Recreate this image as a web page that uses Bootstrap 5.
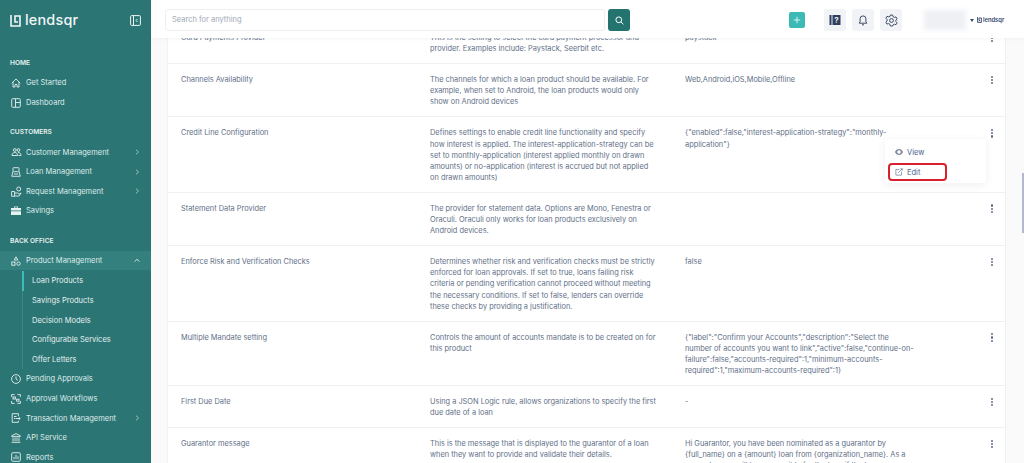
<!DOCTYPE html>
<html lang="en">
<head>
    <meta charset="UTF-8">
    <meta name="viewport" content="width=device-width, initial-scale=1.0">
    <title>Lendsqr - Loan Products</title>
    <link href="https://cdn.jsdelivr.net/npm/bootstrap@5.3.0/dist/css/bootstrap.min.css" rel="stylesheet">
    <script src="https://cdn.jsdelivr.net/npm/bootstrap@5.3.0/dist/js/bootstrap.bundle.min.js"></script>
    <style>
        html, body { height: 100%; overflow: hidden; }
        body { font-family: Inter, "Liberation Sans", sans-serif; font-size: 7.4px; color: #5b6a84; background: #fafafb; }
        svg { display: block; flex: none; }
        .app-shell { height: 463px; }
        .side-bar { width: 151px; background: #2b7574; color: #e6f0ef; flex: none; overflow: hidden; }
        .side-bar > * { flex: none; }
        .brand-row { height: 41px; padding: 0 10px 0 10px; }
        .brand-name { font-size: 14.4px; font-weight: 500; letter-spacing: .2px; color: #f2f7f7; line-height: 1; }
        .side-head { font-size: 6.6px; font-weight: 600; color: #e6f0ef; height: 12px; line-height: 12px; padding-left: 10px; margin-top: 13.8px; margin-bottom: 4.2px; white-space: nowrap; }
        .side-head.head-first { margin-top: 16px; }
        .side-item { height: 19.6px; padding-left: 11px; padding-right: 11.5px; color: #dfeceb; font-size: 7.5px; white-space: nowrap; }
        .side-item .ico { width: 15px; }
        .side-item .chev { margin-left: auto; }
        .side-item.is-open { background: #33807f; margin-bottom: 1px; }
        .sub-list { margin-left: 22px; border-left: 1px solid #3f8685; }
        .sub-item { height: 19.6px; padding-left: 9px; font-size: 7.5px; color: #e6f0ef; display: flex; align-items: center; white-space: nowrap; }
        .sub-item.is-current { box-shadow: -1px 0 0 #3dbdb6, inset 1px 0 0 #3dbdb6; }
        .top-bar { height: 38px; background: #fff; box-shadow: 0 1px 3px rgba(60,70,90,.06); position: relative; z-index: 2; flex: none; padding: 2px 0 0 14px; }
        .top-bar > * { flex: none; }
        .search-box { width: 440px; height: 22px; border: 1px solid #eceef1; border-radius: 3px; padding-left: 6px; font-size: 7.5px; color: #a0a8b6; }
        .search-btn { width: 22px; height: 22px; background: #23746f; border-radius: 3px; margin-left: 3px; }
        .add-btn { width: 16px; height: 16px; background: #3dbab5; border-radius: 2px; margin-left: 159px; }
        .tool-btn { width: 22px; height: 22px; background: #f2f3f6; border-radius: 3px; }
        .name-blur { width: 42px; height: 20px; background: #eef0f3; filter: blur(2px); margin-left: 22px; }
        .tiny-brand { font-size: 5.8px; font-weight: 600; color: #33466f; }
        .drop-caret { width: 0; height: 0; border-left: 2.5px solid transparent; border-right: 2.5px solid transparent; border-top: 3px solid #33466f; }
        .page-body { flex: 1; min-height: 0; }
        .scroll-area { flex: 1; min-width: 0; overflow: hidden; padding-left: 16px; }
        .table-card { background: #fff; border-left: 1px solid #f1f2f4; }
        .cfg-table { table-layout: fixed; width: 100%; margin: 0; font-size: 7.4px; line-height: 11.1px; color: #626f87; }
        .cfg-table td { padding: 10px 14px 9px 13px; border-bottom: 1px solid #eff0f2; color: #626f87; background: transparent; vertical-align: top; }
        .cfg-table td.col-name { width: 249px; }
        .cfg-table td.col-desc { width: 255px; padding-right: 16px; }
        .cfg-table td.col-val { width: 282px; padding-right: 39px; }
        .cfg-table td.col-act { padding: 11.5px 0 0; position: relative; }
        .dots-btn { width: 2.2px; margin-left: 37px; display: flex; flex-direction: column; gap: 1px; }
        .dots-btn i { display: block; width: 2.2px; height: 2.2px; border-radius: 50%; background: #5f6d8c; }
        .row-menu { position: absolute; top: 22px; right: 19px; width: 101px; height: 44px; background: #fff; box-shadow: 0 2px 8px rgba(60,70,90,.08); border-radius: 3px; z-index: 1; padding: 3px 0 0 10px; color: #49628f; }
        .menu-line { height: 20px; font-size: 7.5px; }
        .edit-mark { position: absolute; left: 3px; top: 24px; width: 59px; height: 18px; border: 2px solid #d9202c; border-radius: 4px; }
        .scroll-rail { width: 19px; flex: none; background: #fafafb; border-left: 1px solid #eff0f2; position: relative; }
        .rail-thumb { position: absolute; right: 0; top: 135px; width: 2px; height: 60px; background: #b4b8cc; }
    </style>
</head>
<body>
<div class="app-shell d-flex">
    <aside class="side-bar d-flex flex-column">
        <div class="brand-row d-flex align-items-center">
            <svg width="11" height="12" viewBox="0 0 11 12" fill="none" stroke="#f2f7f7" stroke-width="1.6"><path d="M1 0v11h9V1H5v6h3"/></svg>
            <span class="brand-name ms-1">lendsqr</span>
            <svg class="ms-auto" width="11" height="11" viewBox="0 0 11 11" fill="none" stroke="#eef5f5"><rect x=".6" y=".6" width="9.800" height="9.800" rx="1"/><path d="M3.500 .6v9.800M7.500 4L6 5.500 7.500 7"/></svg>
        </div>
        <div class="side-head head-first">HOME</div>
        <div class="side-item d-flex align-items-center">
            <span class="ico"><svg width="10" height="10" viewBox="0 0 10 10" fill="none" stroke="#e6f0ef" stroke-width=".9"><path d="M.8 5L5 1l4.200 4M2 4v5h2V6.500h2V9h2V4"/></svg></span>Get Started</div>
        <div class="side-item d-flex align-items-center">
            <span class="ico"><svg width="10" height="10" viewBox="0 0 10 10" fill="none" stroke="#e6f0ef" stroke-width=".9"><rect x=".7" y=".7" width="8.600" height="8.600" rx="1"/><path d="M4.500 .7v8.600M4.500 4.500h4.800"/></svg></span>Dashboard</div>
        <div class="side-head">CUSTOMERS</div>
        <div class="side-item d-flex align-items-center">
            <span class="ico"><svg width="11" height="10" viewBox="0 0 11 10" fill="none" stroke="#e6f0ef" stroke-width=".9"><circle cx="3.800" cy="3" r="1.400"/><circle cx="7.400" cy="3" r="1.400"/><path d="M1 8.500c0-2 1.200-3 2.800-3s2.800 1 2.800 3zM7 5.500c2 0 3 1 3 3H7.500"/></svg></span>Customer Management
            <svg class="chev" width="5" height="6" viewBox="0 0 5 6" fill="none" stroke="#b6d2d1" stroke-width=".8"><path d="M1 .7L3.600 3 1 5.300"/></svg></div>
        <div class="side-item d-flex align-items-center">
            <span class="ico"><svg width="10" height="10" viewBox="0 0 10 10" fill="none" stroke="#e6f0ef" stroke-width=".9"><rect x="2" y=".7" width="6" height="4" rx=".5"/><path d="M1.800 4.700L.8 9.300h8.400l-1-4.600M3 7h4"/></svg></span>Loan Management
            <svg class="chev" width="5" height="6" viewBox="0 0 5 6" fill="none" stroke="#b6d2d1" stroke-width=".8"><path d="M1 .7L3.600 3 1 5.300"/></svg></div>
        <div class="side-item d-flex align-items-center">
            <span class="ico"><svg width="11" height="11" viewBox="0 0 11 11" fill="none" stroke="#e6f0ef" stroke-width=".9"><circle cx="7.700" cy="3" r="2"/><path d="M.6 5.500h3v4.800h-3zM3.600 7h3l1.500 1 2-1-2 3H3.600"/></svg></span>Request Management
            <svg class="chev" width="5" height="6" viewBox="0 0 5 6" fill="none" stroke="#b6d2d1" stroke-width=".8"><path d="M1 .7L3.600 3 1 5.300"/></svg></div>
        <div class="side-item d-flex align-items-center">
            <span class="ico"><svg width="10" height="9" viewBox="0 0 10 9" fill="#e6f0ef"><path d="M3.200 2V.6h3.600V2H10v2.600H0V2zM4 1.300V2h2v-.7zM0 5.300h10V9H0z"/></svg></span>Savings</div>
        <div class="side-head">BACK OFFICE</div>
        <div class="side-item is-open d-flex align-items-center">
            <span class="ico"><svg width="10" height="10" viewBox="0 0 10 10" fill="none" stroke="#e6f0ef" stroke-width=".9"><path d="M5 .8L6.800 4H3.200z"/><rect x=".8" y="6" width="3.200" height="3.200"/><circle cx="7.500" cy="7.600" r="1.700"/></svg></span>Product Management
            <svg class="chev" width="6" height="5" viewBox="0 0 6 5" fill="none" stroke="#e6f0ef" stroke-width=".9"><path d="M.7 3.600L3 1.200l2.300 2.400"/></svg></div>
        <div class="sub-list">
            <div class="sub-item is-current">Loan Products</div>
            <div class="sub-item">Savings Products</div>
            <div class="sub-item">Decision Models</div>
            <div class="sub-item">Configurable Services</div>
            <div class="sub-item">Offer Letters</div>
        </div>
        <div class="side-item d-flex align-items-center">
            <span class="ico"><svg width="10" height="10" viewBox="0 0 10 10" fill="none" stroke="#e6f0ef" stroke-width=".9"><circle cx="5" cy="5" r="4.400"/><path d="M5 2.400V5l1.800 1.200"/></svg></span>Pending Approvals</div>
        <div class="side-item d-flex align-items-center">
            <span class="ico"><svg width="10" height="10" viewBox="0 0 10 10" fill="none" stroke="#e6f0ef" stroke-width=".9"><path d="M.6 3V.6h3M6.400 .6h3v2.400M9.400 7v2.400h-3M3.600 9.400h-3V7"/><rect x="2" y="3" width="2.400" height="2"/><rect x="5.600" y="5.200" width="2.400" height="2"/></svg></span>Approval Workflows</div>
        <div class="side-item d-flex align-items-center">
            <span class="ico"><svg width="10" height="10" viewBox="0 0 10 10" fill="none" stroke="#e6f0ef" stroke-width=".9"><path d="M7.400 3V.7H1.200v8.600h6.200V8M3 3.500h2.500M3 5.500h1.500M5 5.500h4.200M7.600 4l1.600 1.500L7.600 7"/></svg></span>Transaction Management
            <svg class="chev" width="5" height="6" viewBox="0 0 5 6" fill="none" stroke="#b6d2d1" stroke-width=".8"><path d="M1 .7L3.600 3 1 5.300"/></svg></div>
        <div class="side-item d-flex align-items-center">
            <span class="ico"><svg width="10" height="10" viewBox="0 0 10 10" fill="none" stroke="#e6f0ef" stroke-width=".9"><path d="M5 .6L9.400 2.800v.6H.6v-.6zM.6 9.300h8.800M2 4.400v3.800M4 4.400v3.800M6 4.400v3.800M8 4.400v3.800"/></svg></span>API Service</div>
        <div class="side-item d-flex align-items-center">
            <span class="ico"><svg width="10" height="10" viewBox="0 0 10 10" fill="none" stroke="#e6f0ef" stroke-width=".9"><rect x=".7" y=".7" width="8.600" height="8.600" rx="1"/><path d="M3 7.200V5M5 7.200V2.800M7 7.200V4.400"/></svg></span>Reports</div>
    </aside>

    <div class="flex-grow-1 d-flex flex-column" style="min-width:0">
        <header class="top-bar d-flex align-items-center">
            <div class="search-box d-flex align-items-center">Search for anything</div>
            <div class="search-btn d-flex align-items-center justify-content-center">
                <svg width="9" height="9" viewBox="0 0 9 9" fill="none" stroke="#fff"><circle cx="3.800" cy="3.800" r="2.900"/><path d="M6 6l2.400 2.400"/></svg>
            </div>
            <div class="add-btn d-flex align-items-center justify-content-center">
                <svg width="8" height="8" viewBox="0 0 8 8" stroke="#d5f3f1"><path d="M4 .8v6.400M.8 4h6.400"/></svg>
            </div>
            <div class="tool-btn d-flex align-items-center justify-content-center" style="margin-left:19px">
                <svg width="12" height="12" viewBox="0 0 12 12"><path fill="#2f3f5e" d="M.5 1h2v10h-2zM3.500 1H11.500v10H3.500z"/><text x="7.500" y="9" font-size="8" font-weight="700" text-anchor="middle" fill="#f2f3f6" font-family="Inter">?</text></svg>
            </div>
            <div class="tool-btn d-flex align-items-center justify-content-center" style="margin-left:6px">
                <svg width="12" height="12" viewBox="0 0 12 12" fill="none" stroke="#3d4b66"><path d="M2.200 9.200h7.600L8.900 7.600V4.800a2.900 2.900 0 0 0-5.800 0v2.800zM5 10.800h2"/></svg>
            </div>
            <div class="tool-btn d-flex align-items-center justify-content-center" style="margin-left:6px">
                <svg width="13" height="13" viewBox="0 0 13 13" fill="none" stroke="#3d4b66"><path d="M5.400 1h2.200l.4 1.600 1.400.8 1.600-.5 1.100 1.900-1.200 1.200v1.600l1.200 1.200-1.100 1.900-1.600-.5-1.400.8L7.600 12H5.400L5 10.400l-1.400-.8-1.600.5-1.100-1.900 1.200-1.200V5.400L.9 4.200 2 2.300l1.600.5L5 2.600z"/><circle cx="6.500" cy="6.500" r="1.900"/></svg>
            </div>
            <div class="name-blur"></div>
            <div class="drop-caret ms-1"></div>
            <svg style="margin-left:3px" width="5" height="6" viewBox="0 0 5 6" fill="none" stroke="#33466f" stroke-width=".9"><path d="M.6 0v5.400h3.800V1H2v2.600h1.200"/></svg>
            <span class="tiny-brand" style="margin-left:1px">lendsqr</span>
        </header>

        <div class="page-body d-flex">
            <main class="scroll-area" id="scrollArea">
                <div class="table-card">
                    <table class="table cfg-table">
                        <tbody>
                            <tr>
                                <td class="col-name">Card Payments Provider</td>
                                <td class="col-desc">This is the setting to select the card payment processor and provider. Examples include: Paystack, Seerbit etc.</td>
                                <td class="col-val">paystack</td>
                                <td class="col-act"><div class="dots-btn"><i></i><i></i><i></i></div></td>
                            </tr>
                            <tr>
                                <td class="col-name">Channels Availability</td>
                                <td class="col-desc">The channels for which a loan product should be available. For example, when set to Android, the loan products would only show on Android devices</td>
                                <td class="col-val">Web,Android,iOS,Mobile,Offline</td>
                                <td class="col-act"><div class="dots-btn"><i></i><i></i><i></i></div></td>
                            </tr>
                            <tr>
                                <td class="col-name">Credit Line Configuration</td>
                                <td class="col-desc">Defines settings to enable credit line functionality and specify how interest is applied. The interest-application-strategy can be set to monthly-application (interest applied monthly on drawn amounts) or no-application (interest is accrued but not applied on drawn amounts)</td>
                                <td class="col-val">{"enabled":false,"interest-application-strategy":"monthly-application"}</td>
                                <td class="col-act">
                                    <div class="dots-btn"><i></i><i></i><i></i></div>
                                    <div class="row-menu">
                                        <div class="menu-line d-flex align-items-center">
                                            <svg width="8" height="6" viewBox="0 0 8 6" fill="#7d8aa0"><path d="M4 0C2.200 0 .8 1.200 0 3c.8 1.800 2.200 3 4 3s3.200-1.200 4-3C7.200 1.200 5.800 0 4 0zm0 4.800a1.800 1.800 0 1 1 0-3.600 1.800 1.800 0 0 1 0 3.600z"/></svg>
                                            <span class="ms-1">View</span>
                                        </div>
                                        <div class="menu-line d-flex align-items-center">
                                            <svg width="8" height="8" viewBox="0 0 9 9" fill="none" stroke="#6d7b93" stroke-width=".8"><path d="M5 1.600H1v6.400h6.400V4M3.500 5.500L8 1M6 .8h2.200V3"/></svg>
                                            <span class="ms-1">Edit</span>
                                        </div>
                                        <div class="edit-mark"></div>
                                    </div>
                                </td>
                            </tr>
                            <tr>
                                <td class="col-name">Statement Data Provider</td>
                                <td class="col-desc">The provider for statement data. Options are Mono, Fenestra or Oraculi. Oraculi only works for loan products exclusively on Android devices.</td>
                                <td class="col-val"></td>
                                <td class="col-act"><div class="dots-btn"><i></i><i></i><i></i></div></td>
                            </tr>
                            <tr>
                                <td class="col-name">Enforce Risk and Verification Checks</td>
                                <td class="col-desc">Determines whether risk and verification checks must be strictly enforced for loan approvals. If set to true, loans failing risk criteria or pending verification cannot proceed without meeting the necessary conditions. If set to false, lenders can override these checks by providing a justification.</td>
                                <td class="col-val">false</td>
                                <td class="col-act"><div class="dots-btn"><i></i><i></i><i></i></div></td>
                            </tr>
                            <tr>
                                <td class="col-name">Multiple Mandate setting</td>
                                <td class="col-desc">Controls the amount of accounts mandate is to be created on for this product</td>
                                <td class="col-val">{"label":"Confirm your Accounts","description":"Select the number of accounts you want to link","active":false,"continue-on-failure":false,"accounts-required":1,"minimum-accounts-required":1,"maximum-accounts-required":1}</td>
                                <td class="col-act"><div class="dots-btn"><i></i><i></i><i></i></div></td>
                            </tr>
                            <tr>
                                <td class="col-name">First Due Date</td>
                                <td class="col-desc">Using a JSON Logic rule, allows organizations to specify the first due date of a loan</td>
                                <td class="col-val">-</td>
                                <td class="col-act"><div class="dots-btn"><i></i><i></i><i></i></div></td>
                            </tr>
                            <tr>
                                <td class="col-name">Guarantor message</td>
                                <td class="col-desc">This is the message that is displayed to the guarantor of a loan when they want to provide and validate their details.</td>
                                <td class="col-val">Hi Guarantor, you have been nominated as a guarantor by {full_name} on a {amount} loan from {organization_name}. As a guarantor you will be responsible for the loan if the borrower defaults.</td>
                                <td class="col-act"><div class="dots-btn"><i></i><i></i><i></i></div></td>
                            </tr>
                        </tbody>
                    </table>
                </div>
            </main>
            <div class="scroll-rail"><div class="rail-thumb"></div></div>
        </div>
    </div>
</div>
<script>
    // page is photographed part way down the list
    document.getElementById("scrollArea").scrollTop = 16;
</script>
</body>
</html>
